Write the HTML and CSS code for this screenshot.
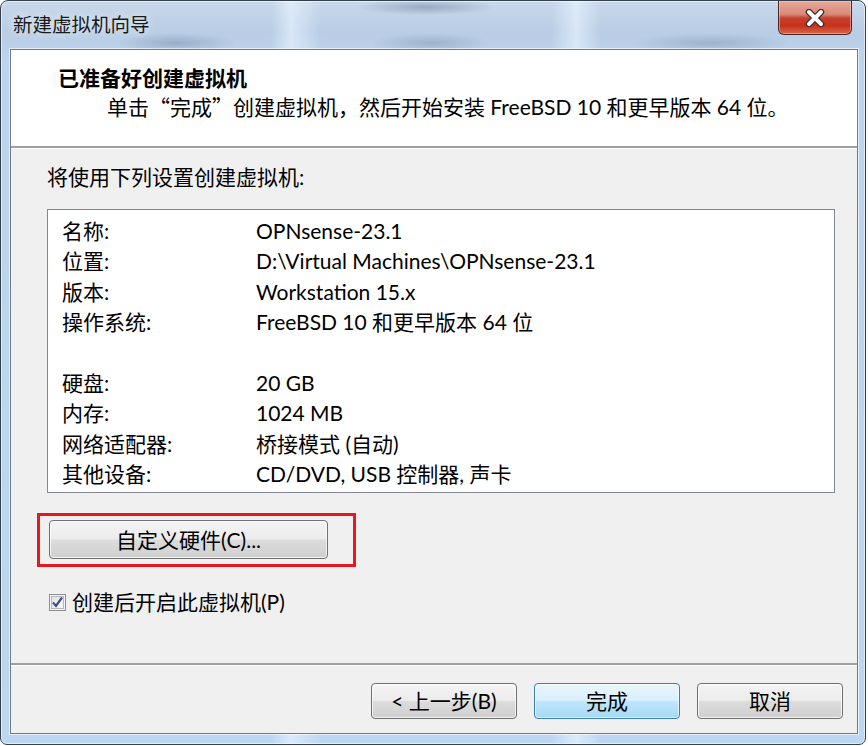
FILE: index.html
```html
<!DOCTYPE html>
<html lang="zh-CN">
<head>
<meta charset="utf-8">
<title>新建虚拟机向导</title>
<link rel="stylesheet" href="styles.css">
</head>
<body>
<div class="window">
  <div class="titlebar">
    <span class="title">新建虚拟机向导</span>
    <div class="close">
      <svg width="22" height="18" viewBox="0 0 22 18">
        <path d="M5 3 L17 15 M17 3 L5 15" stroke="#3b2a2a" stroke-width="6.5" stroke-linecap="round"/>
        <path d="M5 3 L17 15 M17 3 L5 15" stroke="#ffffff" stroke-width="4" stroke-linecap="round"/>
      </svg>
    </div>
  </div>
  <div class="client">
    <div class="header">
      <div class="heading">已准备好创建虚拟机</div>
      <div class="subtitle">单击<span class="q">“</span>完成<span class="q">”</span>创建虚拟机，然后开始安装 FreeBSD 10 和更早版本 64 位。</div>
    </div>
    <div class="content">
      <div class="label">将使用下列设置创建虚拟机:</div>
      <div class="list">
        <div class="row"><span class="k">名称:</span><span class="v">OPNsense-23.1</span></div>
        <div class="row"><span class="k">位置:</span><span class="v">D:\Virtual Machines\OPNsense-23.1</span></div>
        <div class="row"><span class="k">版本:</span><span class="v">Workstation 15.x</span></div>
        <div class="row"><span class="k">操作系统:</span><span class="v">FreeBSD 10 和更早版本 64 位</span></div>
        <div class="row blank"></div>
        <div class="row"><span class="k">硬盘:</span><span class="v">20 GB</span></div>
        <div class="row"><span class="k">内存:</span><span class="v">1024 MB</span></div>
        <div class="row"><span class="k">网络适配器:</span><span class="v">桥接模式 (自动)</span></div>
        <div class="row"><span class="k">其他设备:</span><span class="v">CD/DVD, USB 控制器, 声卡</span></div>
      </div>
      <div class="highlight">
        <div class="btn custom">自定义硬件(C)...</div>
      </div>
      <div class="check">
        <span class="cb">
          <svg width="13" height="13" viewBox="0 0 13 13">
            <path d="M2 6.5 L5 10 L11 1.5" fill="none" stroke="#3d4f8f" stroke-width="2.2" stroke-linejoin="miter"/>
          </svg>
        </span>
        <span>创建后开启此虚拟机(P)</span>
      </div>
    </div>
    <div class="footer">
      <div class="btn">&lt; 上一步(B)</div>
      <div class="btn default">完成</div>
      <div class="btn">取消</div>
    </div>
  </div>
</div>
</body>
</html>
```

FILE: styles.css
```css
* { box-sizing: border-box; }
html, body {
  margin: 0;
  padding: 0;
  background: #ffffff;
}
body {
  width: 868px;
  height: 746px;
  overflow: hidden;
  font-family: "Lato", "Noto Sans CJK SC", sans-serif;
  color: #000;
}
.window {
  width: 866px;
  height: 745px;
  border: 1px solid #34404c;
  border-radius: 8px 8px 7px 7px;
  background:
    radial-gradient(ellipse 60px 10px at 175px 42px, rgba(90,110,140,0.35), rgba(90,110,140,0) 100%),
    radial-gradient(ellipse 70px 8px at 425px 6px, rgba(70,90,120,0.35), rgba(70,90,120,0) 100%),
    radial-gradient(ellipse 60px 10px at 430px 42px, rgba(90,110,140,0.3), rgba(90,110,140,0) 100%),
    radial-gradient(ellipse 80px 10px at 710px 42px, rgba(90,110,140,0.3), rgba(90,110,140,0) 100%),
    linear-gradient(90deg, rgba(255,255,255,0) 0, rgba(255,255,255,0) 270px, rgba(230,242,255,0.7) 290px, rgba(255,255,255,0) 320px, rgba(255,255,255,0) 550px, rgba(230,242,255,0.7) 575px, rgba(255,255,255,0) 600px),
    linear-gradient(180deg, #c9d8ea 0, #b9cde4 30px, #bcd4ee 60px, #bdd7f2 100%);
  display: flex;
  flex-direction: column;
  padding: 0 7px 10px 9px;
  box-shadow: inset 0 0 0 1px rgba(255,255,255,0.55);
}
.titlebar {
  height: 48px;
  display: flex;
  justify-content: space-between;
  align-items: flex-start;
  flex: none;
}
.title {
  font-size: 19.5px;
  color: #1a1a1a;
  margin: 12px 0 0 3px;
  line-height: 24px;
  text-shadow: 0 0 8px rgba(255,255,255,0.9);
}
.close {
  width: 74px;
  height: 34px;
  margin-right: 6px;
  border: 1px solid #4a2620;
  border-top: none;
  border-radius: 0 0 6px 6px;
  background: linear-gradient(180deg, #e6a696 0, #d98a7a 40%, #c4402a 52%, #c8321c 75%, #d9654a 100%);
  box-shadow: inset 0 0 0 1px rgba(255,220,210,0.45);
  display: flex;
  align-items: center;
  justify-content: center;
}
.client {
  flex: 1;
  border: 1px solid #6d7d8d;
  background: #f0f0f0;
  display: flex;
  flex-direction: column;
  box-shadow: 0 0 0 1px rgba(255,255,255,0.6);
}
.header {
  height: 98px;
  background: #ffffff;
  border-bottom: 2px solid #a0a0a0;
  box-shadow: 0 1px 0 #ffffff;
  padding: 12px 0 0 47px;
  flex: none;
}
.heading {
  font-size: 21px;
  font-weight: bold;
  line-height: 30px;
  font-family: "Noto Sans CJK SC", sans-serif;
}
.subtitle {
  font-size: 21px;
  line-height: 28px;
  margin-left: 49px;
}
.q {
  font-family: "Noto Sans CJK SC", sans-serif;
}
.content {
  flex: 1;
  padding: 14px 0 0 36px;
  font-size: 21px;
}
.label {
  line-height: 30px;
  height: 30px;
}
.list {
  margin-top: 17px;
  width: 788px;
  height: 284px;
  background: #ffffff;
  border: 1px solid #828790;
  padding: 6px 0 0 14px;
}
.row {
  display: flex;
  height: 30.4px;
  line-height: 30px;
}
.k {
  width: 194px;
  flex: none;
}
.highlight {
  margin: 20px 0 0 -10px;
  width: 319px;
  height: 54px;
  border: 3px solid #e51922;
  padding: 4px 0 0 9px;
}
.btn {
  height: 37px;
  border: 1px solid #707070;
  border-radius: 4px;
  background: linear-gradient(180deg, #f4f4f4 0, #ececec 48%, #dcdcdc 52%, #cfcfcf 100%);
  box-shadow: inset 0 0 0 1px rgba(255,255,255,0.75);
  display: flex;
  align-items: center;
  justify-content: center;
  font-size: 21px;
  line-height: 30px;
}
.custom {
  width: 279px;
  height: 39px;
}
.check {
  margin: 20px 0 0 2px;
  display: flex;
  align-items: center;
  height: 30px;
  line-height: 30px;
}
.cb {
  width: 17px;
  height: 17px;
  border: 1px solid #8e8f8f;
  background: linear-gradient(135deg, #dcdcdc 0, #f4f4f4 60%, #ffffff 100%);
  box-shadow: inset 0 0 0 1px #f4f4f4, inset 0 0 0 2px #b8b8b8;
  display: flex;
  align-items: center;
  justify-content: center;
  margin-right: 6px;
}
.footer {
  flex: none;
  height: 70px;
  border-top: 2px solid #a0a0a0;
  box-shadow: inset 0 1px 0 #ffffff;
  display: flex;
  justify-content: flex-end;
  gap: 17px;
  padding: 18px 14px 0 0;
}
.footer .btn {
  width: 146px;
  height: 36px;
}
.btn.default {
  border-color: #3c7fb1;
  background: linear-gradient(180deg, #eaf6fd 0, #d9f0fc 48%, #bee6fd 52%, #a7d9f5 100%);
  box-shadow: inset 0 0 0 1px rgba(255,255,255,0.6);
}
```
